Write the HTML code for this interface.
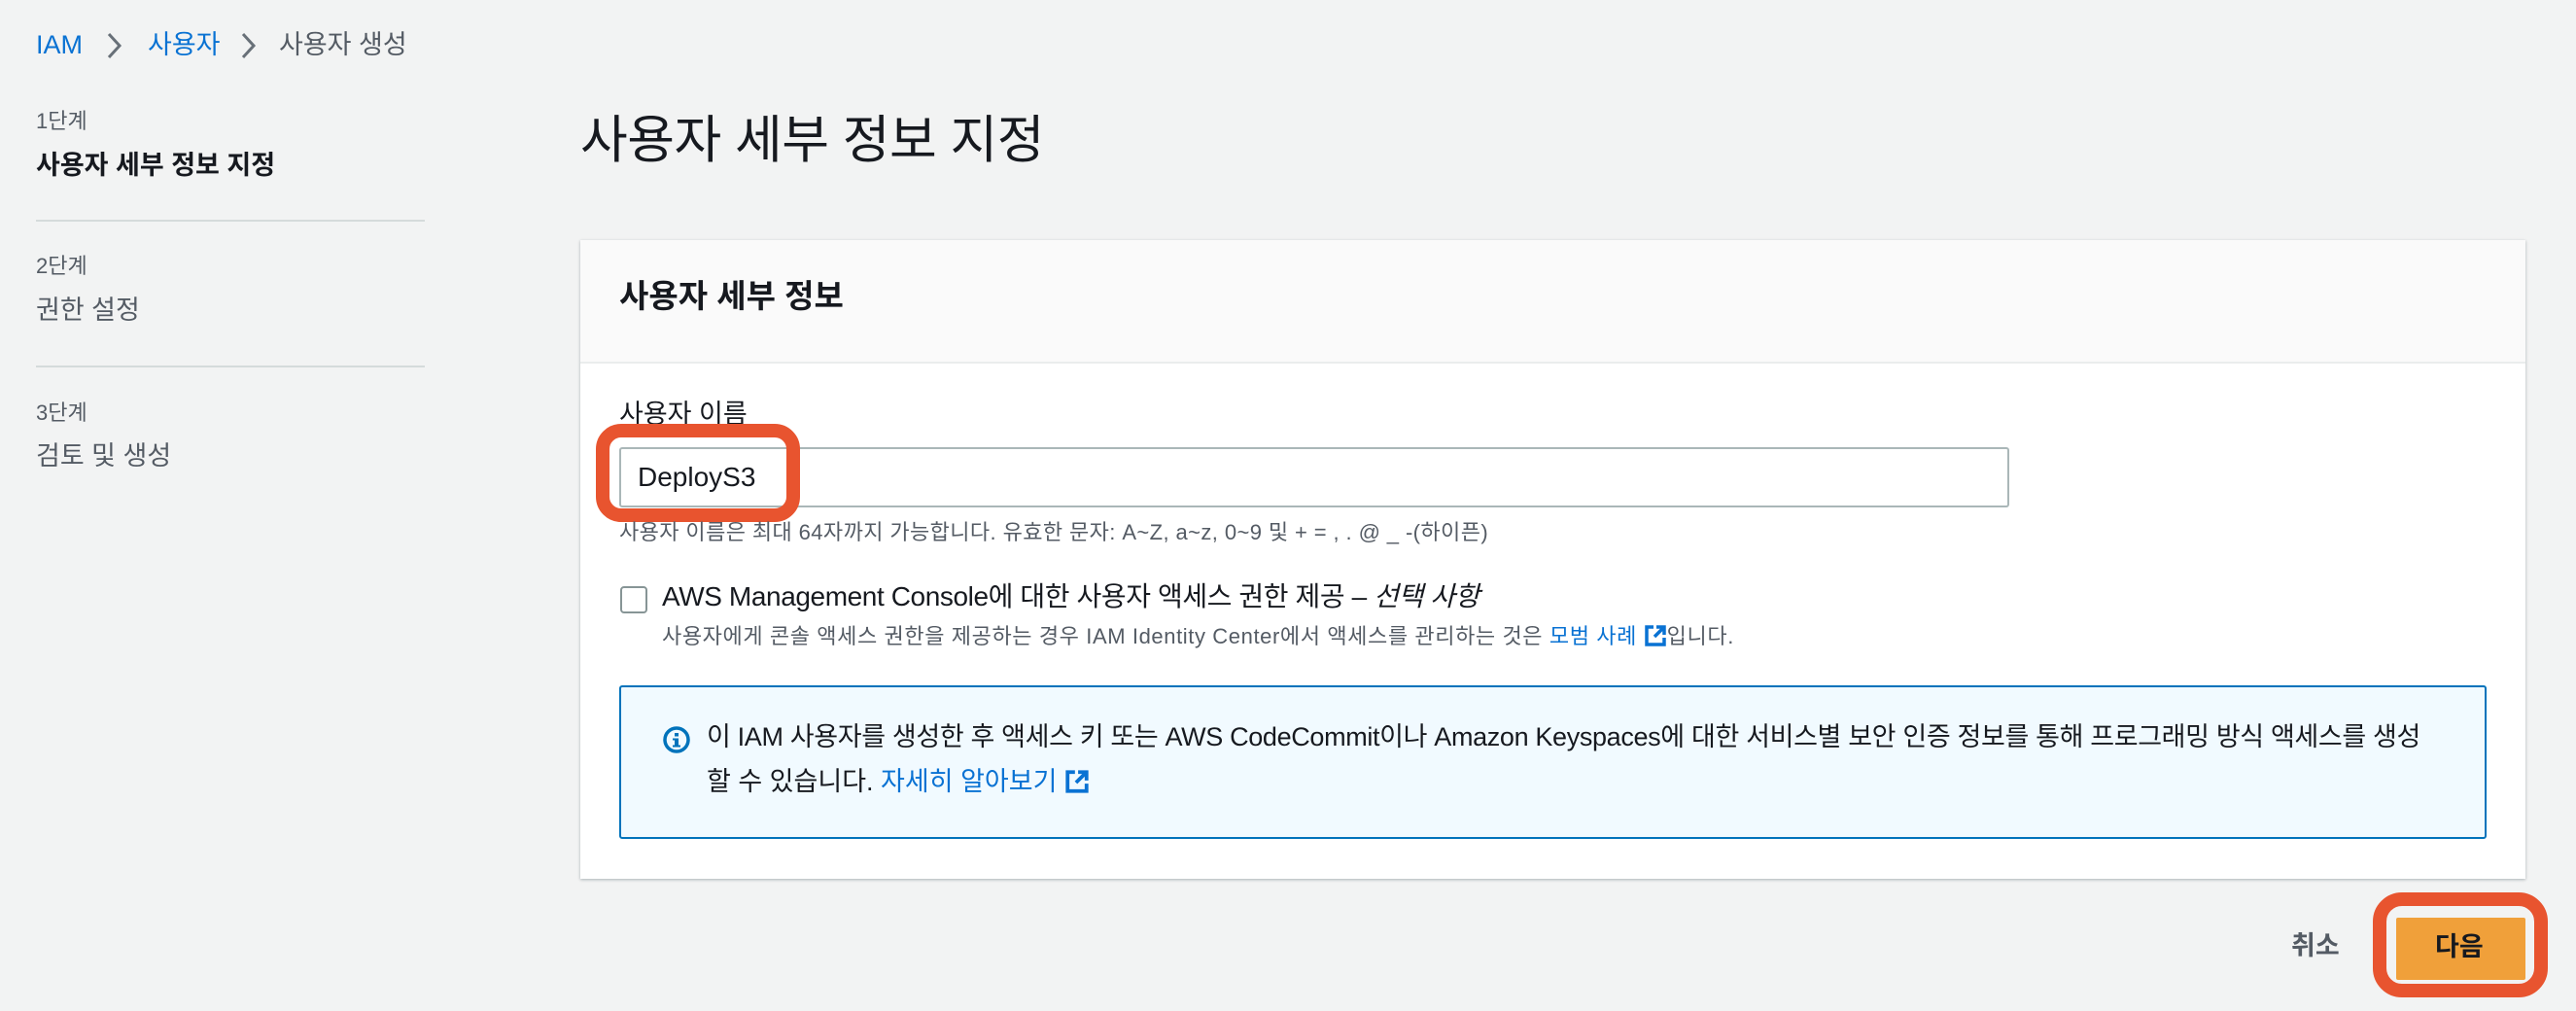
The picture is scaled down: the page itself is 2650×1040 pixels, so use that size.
<!DOCTYPE html>
<html><head><meta charset="utf-8"><style>
*{margin:0;padding:0;box-sizing:border-box}
body{width:2650px;height:1040px;background:#f2f3f3;font-family:"Liberation Sans","Noto Sans CJK KR",sans-serif;color:#16191f;position:relative;overflow:hidden}
.a{position:absolute;white-space:nowrap;line-height:1}
.link{color:#0972d3}
.g{color:#545b64}
</style></head><body>
<div class="a" style="left:37px;top:33px;font-size:27px"><span class="link">IAM</span></div>
<svg class="a" style="left:108px;top:32px" width="20" height="30"><path d="M4 3 L15 15 L4 27" stroke="#687078" stroke-width="3" fill="none"/></svg>
<div class="a link" style="left:152px;top:33px;font-size:27px">사용자</div>
<svg class="a" style="left:246px;top:32px" width="20" height="30"><path d="M4 3 L15 15 L4 27" stroke="#687078" stroke-width="3" fill="none"/></svg>
<div class="a g" style="left:287px;top:33px;font-size:27px">사용자 생성</div>

<div class="a g" style="left:37px;top:114px;font-size:22px">1단계</div>
<div class="a" style="left:37px;top:157px;font-size:27px;font-weight:bold">사용자 세부 정보 지정</div>
<div class="a" style="left:37px;top:226px;width:400px;height:2px;background:#d5dbdb"></div>
<div class="a g" style="left:37px;top:263px;font-size:22px">2단계</div>
<div class="a g" style="left:37px;top:306px;font-size:27px">권한 설정</div>
<div class="a" style="left:37px;top:376px;width:400px;height:2px;background:#d5dbdb"></div>
<div class="a g" style="left:37px;top:414px;font-size:22px">3단계</div>
<div class="a g" style="left:37px;top:456px;font-size:27px">검토 및 생성</div>

<div class="a" style="left:597px;top:118px;font-size:53px;letter-spacing:-0.5px">사용자 세부 정보 지정</div>

<div class="a" style="left:597px;top:247px;width:2001px;height:657px;background:#fff;box-shadow:0 1px 3px rgba(0,28,36,.3)">
  <div style="position:absolute;left:0;top:0;right:0;height:127px;background:#fafafa;border-bottom:2px solid #eaeded"></div>
</div>
<div class="a" style="left:637px;top:288px;font-size:33px;font-weight:bold">사용자 세부 정보</div>
<div class="a" style="left:637px;top:413px;font-size:27px">사용자 이름</div>
<div class="a" style="left:637px;top:460px;width:1430px;height:62px;border:2px solid #aab7b8;border-radius:3px;background:#fff"></div>
<div class="a" style="left:656px;top:477px;font-size:28px">DeployS3</div>
<div class="a" style="left:613px;top:436px;width:210px;height:101px;border:14px solid #e8542f;border-radius:26px"></div>
<div class="a g" style="left:637px;top:537px;font-size:22px;letter-spacing:0.4px">사용자 이름은 최대 64자까지 가능합니다. 유효한 문자: A~Z, a~z, 0~9 및 + = , . @ _ -(하이픈)</div>

<div class="a" style="left:638px;top:603px;width:28px;height:28px;border:2px solid #879596;border-radius:4px;background:#fff"></div>
<div class="a" style="left:681px;top:600px;font-size:28px;letter-spacing:-0.4px">AWS Management Console에 대한 사용자 액세스 권한 제공 – <i>선택 사항</i></div>
<div class="a g" style="left:681px;top:642px;font-size:22px;letter-spacing:0.6px">사용자에게 콘솔 액세스 권한을 제공하는 경우 IAM Identity Center에서 액세스를 관리하는 것은 <span class="link">모범 사례</span> <svg width="24" height="24" viewBox="0 0 24 24" style="vertical-align:-4px"><path d="M10 3H3v18h18v-7" stroke="#0972d3" stroke-width="3.5" fill="none"/><path d="M13 3h8v8M21 3L11 13" stroke="#0972d3" stroke-width="3.5" fill="none"/></svg>입니다.</div>

<div class="a" style="left:637px;top:705px;width:1921px;height:158px;border:2px solid #0073bb;border-radius:3px;background:#f1faff"></div>
<svg class="a" style="left:681px;top:746px" width="30" height="30" viewBox="0 0 30 30"><circle cx="15" cy="15" r="12" stroke="#0073bb" stroke-width="3.5" fill="none"/><rect x="13" y="8" width="4" height="3.5" fill="#0073bb"/><path d="M11 13.5h6v7h2v2h-8v-2h2v-5h-2z" fill="#0073bb"/></svg>
<div class="a" style="left:727px;top:745px;font-size:27px;letter-spacing:-0.35px">이 IAM 사용자를 생성한 후 액세스 키 또는 AWS CodeCommit이나 Amazon Keyspaces에 대한 서비스별 보안 인증 정보를 통해 프로그래밍 방식 액세스를 생성</div>
<div class="a" style="left:727px;top:791px;font-size:27px">할 수 있습니다. <span class="link">자세히 알아보기</span> <svg width="26" height="26" viewBox="0 0 24 24" style="vertical-align:-4px"><path d="M10 3H3v18h18v-7" stroke="#0972d3" stroke-width="3.5" fill="none"/><path d="M13 3h8v8M21 3L11 13" stroke="#0972d3" stroke-width="3.5" fill="none"/></svg></div>

<div class="a" style="left:2357px;top:960px;font-size:27px;font-weight:bold;color:#545b64">취소</div>
<div class="a" style="left:2465px;top:944px;width:133px;height:64px;background:#f0a03a;border-radius:2px"></div>
<div class="a" style="left:2505px;top:961px;font-size:27px;font-weight:bold">다음</div>
<div class="a" style="left:2441px;top:918px;width:180px;height:108px;border:14px solid #e8542f;border-radius:30px"></div>
</body></html>
